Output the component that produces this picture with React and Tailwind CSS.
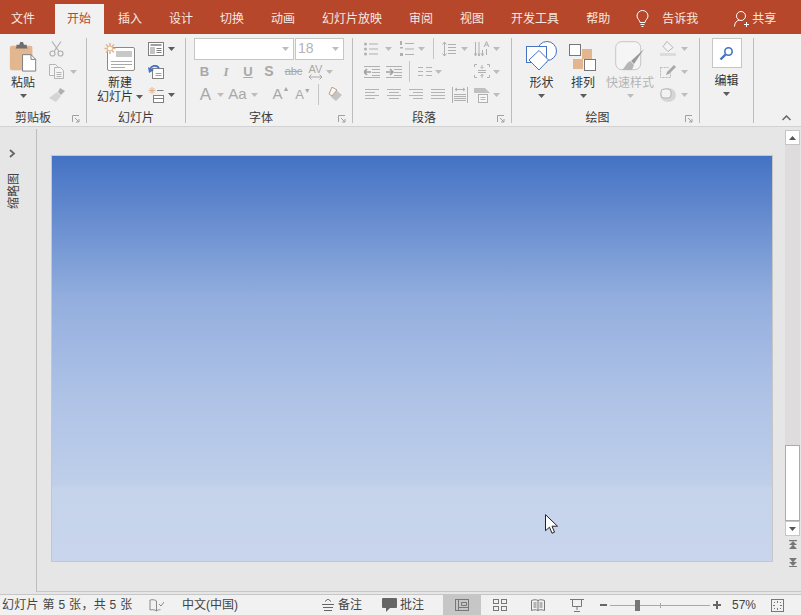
import React from 'react';

const GREY = '#b4b4b4';
const ORANGE = '#e2b68e';
const BLUE = '#4472c4';

const Caret = ({ color = '#5c5c5c' }) => (
    <svg width="7" height="4" viewBox="0 0 7 4" className="shrink-0"><path d="M0 0h7L3.5 4z" fill={color} /></svg>
);

const Launcher = () => (
    <svg width="8" height="8" viewBox="0 0 8 8" fill="none" stroke="#a0a0a0"><path d="M.5 7V.5H7M3 3l4 4M7 4v3H4" /></svg>
);

// ---- big icons ----
const PasteIcon = () => (
    <svg width="28" height="30" viewBox="0 0 28 32">
        <rect x="0" y="4" width="24" height="26" rx="2" fill={ORANGE} />
        <path d="M7 5V3h3l1-3h3l1 3h3v2l1 2H6z" fill="#6f6f6f" />
        <path d="M13.500 13.500h9l5 5v12.500h-14z" fill="#fff" stroke="#7a7a7a" />
        <path d="M22.500 13.500v5h5" fill="none" stroke="#7a7a7a" />
    </svg>
);

const NewSlideIcon = () => (
    <svg width="32" height="29" viewBox="0 0 32 29" fill="none">
        <rect x="3.500" y="4.500" width="27" height="23" rx="1.500" fill="#fff" stroke="#8a8a8a" />
        <rect x="12" y="8" width="16" height="6" fill="#c8c8c8" />
        <path d="M7 18.500h21M7 21.500h21M7 24.500h14" stroke="#a8a8a8" />
        <path d="M6 0v11M.5 5.500h11M2 1.500l8 8M10 1.500l-8 8" stroke={ORANGE} strokeWidth="1.500" />
        <circle cx="6" cy="5.500" r="2.500" fill="#fff" stroke={ORANGE} />
    </svg>
);

const ShapesIcon = () => (
    <svg width="31" height="31" viewBox="0 0 31 31" fill="none" stroke={BLUE}>
        <circle cx="21" cy="10" r="9.500" fill="#fff" />
        <rect x=".5" y="5.500" width="20" height="16" fill="#fff" />
        <path d="M13 9.500l9.500 9.500L13 29 3 19z" fill="#fff" />
    </svg>
);

const ArrangeIcon = () => (
    <svg width="28" height="28" viewBox="0 0 28 28">
        <rect x="13" y="5" width="10" height="10" fill={ORANGE} />
        <rect x="4" y="15" width="10" height="10" fill={ORANGE} />
        <rect x=".5" y=".5" width="11" height="11" fill="#fff" stroke="#777" />
        <rect x="15.500" y="15.500" width="11" height="11" fill="#fff" stroke="#777" />
    </svg>
);

const QuickStyleIcon = () => (
    <svg width="31" height="31" viewBox="0 0 31 31" fill="none">
        <rect x=".7" y=".7" width="25" height="28" rx="6" stroke="#c6c6c6" fill="#f5f5f5" />
        <path d="M29 8L16 20l3 3z" fill="#9a9a9a" />
        <path d="M15 20l4 4-2 5H7c3-2 4-7 8-9z" fill="#b6b6b6" />
    </svg>
);

const SearchIcon = () => (
    <svg width="15" height="15" viewBox="0 0 15 15" fill="none">
        <circle cx="9.500" cy="5.500" r="3.700" stroke={BLUE} strokeWidth="1.600" />
        <path d="M6.500 8.500L1.500 13.500" stroke={BLUE} strokeWidth="2.400" />
    </svg>
);

// ---- small icons ----
const ScissorsIcon = () => (
    <svg width="15" height="16" viewBox="0 0 15 16" fill="none" stroke="#b0b0b0" strokeWidth="1.200">
        <path d="M3 .5l7 10M12 .5l-7 10" />
        <circle cx="3.500" cy="12.500" r="2.500" />
        <circle cx="11.500" cy="12.500" r="2.500" />
    </svg>
);
const CopyIcon = () => (
    <svg width="15" height="15" viewBox="0 0 15 15" fill="#f4f4f4" stroke="#b4b4b4">
        <path d="M.5.500h6l2 2v9h-8z" />
        <path d="M5.500 3.500h6l3 3v8h-9z" />
        <path d="M7.500 8.500h5M7.500 10.500h5M7.500 12.500h5" />
    </svg>
);
const BrushIcon = () => (
    <svg width="16" height="14" viewBox="0 0 16 14">
        <path d="M11 0l5 3-4 4-3-3z" fill="#b0b0b0" />
        <path d="M8 4l4 4-5 6-7-4z" fill="#d4d4d4" />
    </svg>
);
const LayoutIcon = () => (
    <svg width="16" height="14" viewBox="0 0 16 14" fill="none" stroke="#7e7e7e">
        <rect x=".5" y=".5" width="15" height="13" fill="#fff" />
        <path d="M2.500 3h11" strokeWidth="1.500" />
        <rect x="2" y="5" width="5" height="7" fill="#c4c4c4" stroke="none" />
        <path d="M8.500 6.500h5M8.500 8.500h5M8.500 10.500h5" />
    </svg>
);
const ResetIcon = () => (
    <svg width="16" height="14" viewBox="0 0 16 14" fill="none">
        <rect x="4.500" y="3.500" width="11" height="10" fill="#fff" stroke="#808080" />
        <path d="M7.500 8.500h6M7.500 10.500h6" stroke="#a0a0a0" />
        <path d="M2 4.500C3 1 8-1 11 3" stroke={BLUE} strokeWidth="1.800" />
        <path d="M0 2l1 6 5-3z" fill={BLUE} />
    </svg>
);
const SectionIcon = () => (
    <svg width="16" height="16" viewBox="0 0 16 16" fill="none">
        <path d="M4 0v7M.5 3.500h7M1.500 1l5 5M6.500 1l-5 5" stroke={ORANGE} />
        <path d="M9 3.500h6.500" stroke="#808080" />
        <rect x="5.500" y="8.500" width="10" height="7" fill="#fff" stroke="#808080" />
        <path d="M5.500 11.500h10" stroke="#808080" />
    </svg>
);
const FillIcon = () => (
    <svg width="16" height="15" viewBox="0 0 16 15">
        <path d="M7 .5l6 6-5 4-5-5z" fill="#f4f4f4" stroke="#b4b4b4" />
        <rect x="0" y="12" width="16" height="3" fill="#dcdcdc" />
    </svg>
);
const OutlineIcon = () => (
    <svg width="16" height="13" viewBox="0 0 16 13" fill="none">
        <path d="M.5 2.500h9M.5 2.500v10h10v-5" stroke="#b8b8b8" strokeDasharray="2 1" />
        <path d="M14 0l2 2-7 7-3 1 1-3z" fill="#a8a8a8" />
    </svg>
);
const EffectIcon = () => (
    <svg width="16" height="14" viewBox="0 0 16 14">
        <ellipse cx="8" cy="7" rx="8" ry="7" fill="#d6d6d6" />
        <rect x="1" y="1" width="10" height="9" rx="3" fill="#f2f2f2" stroke="#b4b4b4" />
    </svg>
);
const EraserIcon = () => (
    <svg width="16" height="15" viewBox="0 0 16 15">
        <path d="M9 3l6 5-6 6-5-4z" fill="#c4c4c4" />
        <path d="M5 0l5 3-5 6-3-2z" fill="#f6f6f6" stroke="#c09a80" />
    </svg>
);

const Lines = ({ w = 16, h = 11, rows }) => (
    <svg width={w} height={h} viewBox={`0 0 ${w} ${h}`} stroke={GREY} fill="none">
        {rows.map((r, i) => <path key={i} d={`M${r[0]} ${r[2] + 0.5}H${r[1]}`} />)}
    </svg>
);

const BulletsIcon = () => (
    <svg width="14" height="14" viewBox="0 0 14 14" fill="#b0b0b0" stroke="none">
        <circle cx="1.500" cy="2" r="1.500" /><circle cx="1.500" cy="7" r="1.500" /><circle cx="1.500" cy="12" r="1.500" />
        <path d="M5 1.500h9v1H5zM5 6.500h9v1H5zM5 11.500h9v1H5z" />
    </svg>
);
const NumbersIcon = () => (
    <svg width="15" height="16" viewBox="0 0 15 16" fill="#b0b0b0">
        <path d="M1 0h2v4H1zM1 6h3v1.500H1zM1 12h3v3H1z" />
        <path d="M6 2h9v1H6zM6 7.500h9v1H6zM6 13h9v1H6z" />
    </svg>
);
const LineSpaceIcon = () => (
    <svg width="14" height="16" viewBox="0 0 14 16" fill="none" stroke="#b0b0b0">
        <path d="M2.500 1v14M.5 3.500l2-2.500 2 2.500M.5 12.500l2 2.500 2-2.500M6 3.500h8M6 6.500h8M6 9.500h8M6 12.500h8" />
    </svg>
);
const TextDirIcon = () => (
    <svg width="16" height="16" viewBox="0 0 16 16" fill="none" stroke="#b0b0b0">
        <path d="M1.500 1v14M5 1v14M8.500 9v6M.5 12.500l1 2.500 1-2.500M4 12.500l1 2.500 1-2.500M7.500 12.500l1 2.500 1-2.500M10 6l2.500-5.500L15 6M11 4h3M12.500 8v6" />
    </svg>
);
const OutdentIcon = ({ flip }) => (
    <svg width="16" height="12" viewBox="0 0 16 12" fill="none" stroke="#b0b0b0">
        <path d="M0 .5h16M8 3.500h8M8 6.500h8M8 9.500h8M0 11.500h16" />
        <path d={flip ? 'M7 6H0M4 3l3 3-3 3' : 'M0 6h7M3 3L0 6l3 3'} strokeWidth="1.600" stroke="#a0a0a0" />
    </svg>
);
const AlignTextIcon = () => (
    <svg width="16" height="15" viewBox="0 0 16 15" fill="none" stroke="#b0b0b0">
        <path d="M.5 3V.5H3M13 .5h2.500V3M.5 11v2.500H3M13 13.500h2.500V11" />
        <path d="M4 6.500h8M4 8.500h8M8 1v3M6.500 3L8 4.500 9.500 3M8 10v4M6.500 12L8 10.500 9.500 12" />
    </svg>
);
const JustifyIcon = () => (
    <svg width="16" height="16" viewBox="0 0 16 16" fill="none" stroke="#b0b0b0">
        <path d="M.5 0v16M15.500 0v16M3 2.500h10M3 2.500l2-1.500M3 2.500L5 4M13 2.500L11 1M13 2.500L11 4M2 7.500h12M2 9.500h12M2 11.500h12M2 13.500h12" />
    </svg>
);
const SmartArtIcon = () => (
    <svg width="16" height="16" viewBox="0 0 16 16" fill="none">
        <path d="M0 1h11l5 5H0z" fill="#c0c0c0" />
        <rect x="4.500" y="7.500" width="9" height="8" fill="#f6f6f6" stroke="#b0b0b0" />
        <path d="M6.500 10.500h5M6.500 12.500h5" stroke="#b8b8b8" />
    </svg>
);

// ---- layout pieces ----
const Group = ({ className, label, labelClass = '', launcher = true, children }) => (
    <div className={`flex flex-col h-[92px] shrink-0 ${className}`}>
        <div className="flex h-[74px]">{children}</div>
        <div className="flex items-end h-[18px]">
            <span className={`flex-1 text-center text-[12px] leading-[16px] text-[#3a3a3a] ${labelClass}`}>{label}</span>
            {launcher && <span className="w-[14px] flex pb-[3px]"><Launcher /></span>}
        </div>
    </div>
);

const Sep = () => <div className="w-px h-[85px] mt-[4px] bg-[#bdbdbd] shrink-0" />;

const Large = ({ icon, label, className = '', labelClass = 'text-[#333]', caret }) => (
    <div className={`flex flex-col items-center pt-[6px] shrink-0 ${className}`}>
        <div className="h-[32px] flex items-end justify-center">{icon}</div>
        <span className={`mt-[4px] text-[12px] leading-[14px] whitespace-nowrap ${labelClass}`}>{label}</span>
        <div className="mt-[4px]"><Caret color={caret} /></div>
    </div>
);

const Rows = ({ className = '', children }) => <div className={`flex flex-col pt-[3px] ${className}`}>{children}</div>;
const Row = ({ className = '', children }) => <div className={`flex items-center h-[23px] shrink-0 ${className}`}>{children}</div>;
const Slot = ({ className = '', children }) => <div className={`flex items-center justify-center shrink-0 ${className}`}>{children}</div>;
const Lt = () => <Caret color="#bdbdbd" />;

const tabs = ['插入', '设计', '切换', '动画', '幻灯片放映', '审阅', '视图', '开发工具', '帮助'];

const App = () => {
    return (
        <div className="w-[801px] h-[615px] overflow-hidden flex flex-col bg-[#e6e6e6] font-['Liberation_Sans','Noto_Sans_CJK_SC',sans-serif] select-none relative">
            {/* 标题 탭 */}
            <div className="h-[34px] shrink-0 bg-[#b7472a] flex items-end text-[12px] text-[#f6e9e5] pl-[11px]">
                <span className="w-[24px] h-[30px] leading-[30px] mr-[20px]">文件</span>
                <span className="w-[49px] h-[30px] leading-[30px] bg-[#f1f1f1] text-[#b7472a] pl-[12px] mr-px">开始</span>
                {tabs.map(t => <span key={t} className="h-[30px] leading-[30px] px-[13px] mr-px whitespace-nowrap">{t}</span>)}
                <Slot className="h-[30px] w-[20px] ml-[8px]">
                    <svg width="13" height="18" viewBox="0 0 13 18" fill="none" stroke="#fff"><path d="M4 12.500C4 10 1 9 1 6a5.500 5.500 0 0 1 11 0c0 3-3 4-3 6.500zM4.500 14.500h4M5.500 16.500h2" /></svg>
                </Slot>
                <span className="h-[30px] leading-[30px] ml-[10px]">告诉我</span>
                <Slot className="h-[30px] w-[15px] ml-[36px]">
                    <svg width="15" height="16" viewBox="0 0 15 16" fill="none" stroke="#fff"><circle cx="7" cy="5" r="4.500" /><path d="M.5 15.500c0-4 2.500-6 5-6.500M10 13.500h5M12.500 11v5" /></svg>
                </Slot>
                <span className="h-[30px] leading-[30px] ml-[3px]">共享</span>
            </div>

            {/* 리본 */}
            <div className="h-[92px] shrink-0 bg-[#f1f1f1] flex text-[#b0b0b0]">
                <Group className="w-[86px]" label="剪贴板" labelClass="pr-[6px]">
                    <Large className="w-[28px] ml-[9px]" icon={<PasteIcon />} label="粘贴" />
                    <Rows className="ml-[12px]">
                        <Row><ScissorsIcon /></Row>
                        <Row><CopyIcon /><span className="ml-[6px]"><Lt /></span></Row>
                        <Row><BrushIcon /></Row>
                    </Rows>
                </Group>
                <Sep />
                <Group className="w-[98px]" label="幻灯片" launcher={false}>
                    <div className="flex flex-col items-center pt-[6px] w-[50px] ml-[8px] shrink-0">
                        <div className="h-[32px] flex items-end"><NewSlideIcon /></div>
                        <span className="mt-[4px] text-[12px] leading-[14px] text-[#333]">新建</span>
                        <span className="text-[12px] leading-[14px] text-[#333] flex items-center gap-[3px] whitespace-nowrap">幻灯片<Caret /></span>
                    </div>
                    <Rows className="ml-[3px]">
                        <Row><LayoutIcon /><span className="ml-[4px]"><Caret /></span></Row>
                        <Row><ResetIcon /></Row>
                        <Row><SectionIcon /><span className="ml-[4px]"><Caret /></span></Row>
                    </Rows>
                </Group>
                <Sep />
                <Group className="w-[166px]" label="字体" labelClass="pr-[2px]">
                    <Rows className="pl-[8px]">
                        <Row className="gap-px">
                            <div className="w-[100px] h-[22px] bg-white border border-[#c6c6c6] flex items-center justify-end pr-[4px]"><Lt /></div>
                            <div className="w-[49px] h-[22px] bg-white border border-[#c6c6c6] flex items-center justify-between pl-[2px] pr-[4px] text-[14px] text-[#b4b4b4]">18<Lt /></div>
                        </Row>
                        <Row className="text-[#a8a8a8] font-bold text-[13px]">
                            <Slot className="w-[21px]">B</Slot>
                            <Slot className="w-[22px] italic font-['Liberation_Serif',serif]">I</Slot>
                            <Slot className="w-[22px] underline">U</Slot>
                            <Slot className="w-[20px] text-[14px]">S</Slot>
                            <Slot className="w-[29px] text-[11px] font-normal line-through">abc</Slot>
                            <div className="w-[15px] flex flex-col items-center shrink-0">
                                <span className="text-[11px] font-normal leading-[10px]">AV</span>
                                <svg width="15" height="6" viewBox="0 0 15 6" fill="none" stroke="#a8a8a8"><path d="M1 3h13M3.500.5L1 3l2.500 2.500M11.500.5L14 3l-2.500 2.500" /></svg>
                            </div>
                            <span className="ml-[3px]"><Lt /></span>
                        </Row>
                        <Row className="text-[#a8a8a8]">
                            <Slot className="w-[23px] text-[17px]">A</Slot>
                            <Lt />
                            <Slot className="w-[27px] text-[15px]">Aa</Slot>
                            <Lt />
                            <Slot className="w-[18px] text-[15px] ml-[14px]">A<span className="text-[7px] leading-[8px] self-start mt-[2px]">▲</span></Slot>
                            <Slot className="w-[18px] text-[13px] ml-[4px]">A<span className="text-[7px] leading-[8px] self-start mt-[2px]">▼</span></Slot>
                            <div className="w-px h-[21px] bg-[#c6c6c6] ml-[6px]" />
                            <span className="ml-[8px] flex"><EraserIcon /></span>
                        </Row>
                    </Rows>
                </Group>
                <Sep />
                <Group className="w-[158px]" label="段落" labelClass="pr-[2px]">
                    <Rows className="pl-[11px]">
                        <Row>
                            <BulletsIcon /><span className="ml-[7px]"><Lt /></span>
                            <span className="ml-[7px] flex"><NumbersIcon /></span><span className="ml-[4px]"><Lt /></span>
                            <div className="w-px h-[21px] bg-[#c6c6c6] ml-[8px]" />
                            <span className="ml-[8px] flex"><LineSpaceIcon /></span><span className="ml-[5px]"><Lt /></span>
                            <span className="ml-[6px] flex"><TextDirIcon /></span><span className="ml-[3px]"><Lt /></span>
                        </Row>
                        <Row>
                            <OutdentIcon /><span className="ml-[6px] flex"><OutdentIcon flip /></span>
                            <div className="w-px h-[21px] bg-[#c6c6c6] ml-[7px]" />
                            <span className="ml-[8px] flex"><Lines w={14} h={10} rows={[[0, 5, 0], [8, 14, 0], [0, 5, 4], [8, 14, 4], [0, 5, 8], [8, 14, 8]]} /></span>
                            <span className="ml-[3px]"><Lt /></span>
                            <span className="ml-[32px] flex"><AlignTextIcon /></span><span className="ml-[3px]"><Lt /></span>
                        </Row>
                        <Row>
                            <span className="ml-px flex"><Lines w={14} h={11} rows={[[0, 14, 0], [0, 10, 3], [0, 14, 6], [0, 10, 9]]} /></span>
                            <span className="ml-[8px] flex"><Lines w={14} h={11} rows={[[0, 14, 0], [2, 12, 3], [0, 14, 6], [2, 12, 9]]} /></span>
                            <span className="ml-[8px] flex"><Lines w={14} h={11} rows={[[0, 14, 0], [4, 14, 3], [0, 14, 6], [4, 14, 9]]} /></span>
                            <span className="ml-[8px] flex"><Lines w={14} h={11} rows={[[0, 14, 0], [0, 14, 3], [0, 14, 6], [0, 14, 9]]} /></span>
                            <span className="ml-[7px] flex"><JustifyIcon /></span>
                            <span className="ml-[6px] flex"><SmartArtIcon /></span><span className="ml-[3px]"><Lt /></span>
                        </Row>
                    </Rows>
                </Group>
                <Sep />
                <Group className="w-[187px]" label="绘图" labelClass="pr-[2px]">
                    <Large className="w-[31px] ml-[14px]" icon={<ShapesIcon />} label="形状" />
                    <Large className="w-[28px] ml-[12px]" icon={<ArrangeIcon />} label="排列" />
                    <Large className="w-[48px] ml-[9px]" icon={<QuickStyleIcon />} label="快速样式" labelClass="text-[#b4b4b4]" caret="#bdbdbd" />
                    <Rows className="ml-[6px]">
                        <Row><FillIcon /><span className="ml-[5px]"><Lt /></span></Row>
                        <Row><OutlineIcon /><span className="ml-[5px]"><Lt /></span></Row>
                        <Row><EffectIcon /><span className="ml-[5px]"><Lt /></span></Row>
                    </Rows>
                </Group>
                <Sep />
                <div className="w-[53px] shrink-0 flex flex-col items-center pt-[4px]">
                    <Slot className="w-[30px] h-[30px] bg-white border border-[#c6c6c6]"><SearchIcon /></Slot>
                    <span className="mt-[6px] text-[12px] leading-[14px] text-[#333]">编辑</span>
                    <div className="mt-[4px]"><Caret /></div>
                </div>
                <Sep />
                <div className="flex-1 flex items-end justify-end pb-[5px] pr-[10px]">
                    <svg width="9" height="6" viewBox="0 0 9 6" fill="none" stroke="#666" strokeWidth="1.500"><path d="M.5 5l4-4 4 4" /></svg>
                </div>
            </div>

            {/* 본문 */}
            <div className="h-px bg-[#d2d2d2] shrink-0" />
            <div className="flex-1 flex min-h-0 bg-[#e6e6e6]">
                <div className="w-[37px] shrink-0 border-r border-[#bdbdbd] flex flex-col items-center pr-[11px] pt-[20px] mt-[2px] mb-[2px]">
                    <svg width="7" height="9" viewBox="0 0 7 9" fill="none" stroke="#666" strokeWidth="1.800"><path d="M1 1l4 3.500L1 8" /></svg>
                    <span className="mt-[15px] ml-[3px] text-[12px] leading-[14px] text-[#444] [writing-mode:vertical-rl] [text-orientation:sideways] rotate-180">缩略图</span>
                </div>
                <div className="flex-1 min-w-0 flex flex-col">
                    <div className="flex-1 min-h-0 flex">
                        <div className="flex-1 pl-[14px] pt-[28px]">
                            <div className="w-[722px] h-[407px] border border-[#c6c6c6] bg-[linear-gradient(180deg,#4472c4_0%,#93aede_35%,#afc3e6_60%,#bfcfea_81%,#c5d3eb_82%,#c8d5ec_100%)]" />
                        </div>
                        <div className="w-[15px] mr-px shrink-0 flex flex-col items-stretch pt-[3px]">
                            <Slot className="h-[15px] bg-white border border-[#c6c6c6]"><svg width="7" height="4" viewBox="0 0 7 4"><path d="M0 4h7L3.500 0z" fill="#555" /></svg></Slot>
                            <div className="h-[300px] bg-[#dedcdc]" />
                            <div className="h-[76px] bg-white border border-[#ababab]" />
                            <Slot className="h-[15px] bg-white border border-[#c6c6c6]"><Caret color="#555" /></Slot>
                            <Slot className="h-[16px]">
                                <svg width="8" height="9" viewBox="0 0 7 8" fill="#777"><path d="M0 0h7v1H0zM3.500 1L7 4.500H0zM3.500 4L7 8H0z" /></svg>
                            </Slot>
                            <Slot className="mt-[2px] h-[16px]">
                                <svg width="8" height="9" viewBox="0 0 7 8" fill="#777"><path d="M0 7h7v1H0zM3.500 7L7 3.500H0zM3.500 4L7 0H0z" /></svg>
                            </Slot>
                        </div>
                    </div>
                    <div className="h-px bg-[#c6c6c6] mb-[2px] shrink-0" />
                </div>
            </div>

            {/* 상태 표시줄 */}
            <div className="h-[21px] shrink-0 bg-[#f1f1f1] border-t border-[#c6c6c6] flex items-center text-[12px] text-[#444] whitespace-nowrap">
                <span className="w-[149px] pl-[2px] tracking-[0.3px]">幻灯片 第 5 张，共 5 张</span>
                <svg width="15" height="13" viewBox="0 0 15 13" fill="none" stroke="#888"><path d="M7.500 2C6 .5 3 .5 1 1v10c2-.5 5-.5 6.500 1 1-1 2.500-1.300 4-1.300M7.500 2v10M10 5l2 2 3-4" /></svg>
                <span className="ml-[18px] w-[140px]">中文(中国)</span>
                <svg width="12" height="12" viewBox="0 0 12 12" fill="none" stroke="#666"><path d="M3 2.500L6 0l3 2.500M0 5.500h12M1 8.500h10M2 11.500h8" /></svg>
                <span className="ml-[4px] w-[44px]">备注</span>
                <svg width="15" height="14" viewBox="0 0 15 14" fill="#666"><path d="M1 0h13a1 1 0 0 1 1 1v8a1 1 0 0 1-1 1H8l-4 4v-4H1a1 1 0 0 1-1-1V1a1 1 0 0 1 1-1z" /></svg>
                <span className="ml-[3px] w-[43px]">批注</span>
                <Slot className="w-[38px] h-[20px] bg-[#c6c6c6]">
                    <svg width="14" height="12" viewBox="0 0 14 12" fill="none" stroke="#777"><rect x=".5" y=".5" width="13" height="11" /><path d="M3.500 1v10M6.500 3.500h5v3h-5zM4 8.500h9" /></svg>
                </Slot>
                <Slot className="w-[38px]">
                    <svg width="14" height="12" viewBox="0 0 14 12" fill="none" stroke="#777"><rect x=".5" y=".5" width="5" height="4" /><rect x="8.500" y=".5" width="5" height="4" /><rect x=".5" y="7.500" width="5" height="4" /><rect x="8.500" y="7.500" width="5" height="4" /></svg>
                </Slot>
                <Slot className="w-[38px]">
                    <svg width="14" height="13" viewBox="0 0 14 13" fill="none" stroke="#777"><path d="M.5 1.500C3 .5 5.500.5 7 1.500c1.500-1 4-1 6.500 0v10c-2.500-1-5-1-6.500 0-1.500-1-4-1-6.500 0zM7 1.500v10M2.500 4h3M2.500 6h3M2.500 8h3M8.500 4h3M8.500 6h3M8.500 8h3" /></svg>
                </Slot>
                <Slot className="w-[40px]">
                    <svg width="14" height="13" viewBox="0 0 14 13" fill="none" stroke="#777"><path d="M0 .5h14M2.500 1v6.500h9V1M7 8v3M4 12.500h6" /></svg>
                </Slot>
                <svg width="7" height="3" viewBox="0 0 7 3" className="ml-[3px]"><rect width="7" height="2" fill="#666" /></svg>
                <div className="ml-[3px] w-[100px] h-[11px] relative flex items-center">
                    <div className="w-full h-px bg-[#a8a8a8]" />
                    <div className="absolute left-[25px] top-0 w-[5px] h-[11px] bg-[#777]" />
                    <div className="absolute left-[50px] top-[3px] w-px h-[5px] bg-[#a8a8a8]" />
                </div>
                <svg width="8" height="8" viewBox="0 0 8 8" className="ml-[3px]"><path d="M3 0h2v3h3v2H5v3H3V5H0V3h3z" fill="#666" /></svg>
                <span className="ml-[11px] w-[39px]">57%</span>
                <svg width="13" height="13" viewBox="0 0 13 13" fill="none" stroke="#777"><rect x=".5" y=".5" width="12" height="12" /><path d="M6.500 2v2M6.500 9v2M2 6.500h2M9 6.500h2M3 3l1 1M10 3L9 4M3 10l1-1M10 10L9 9" /></svg>
            </div>

            {/* 마우스 커서 */}
            <svg width="13" height="20" viewBox="0 0 13 20" className="absolute left-[545px] top-[514px]"><path d="M.5.700v16l4-3.500 2.500 6 2.500-1-2.500-6h5.500z" fill="#fff" stroke="#222" /></svg>
        </div>
    );
};

export default App;
